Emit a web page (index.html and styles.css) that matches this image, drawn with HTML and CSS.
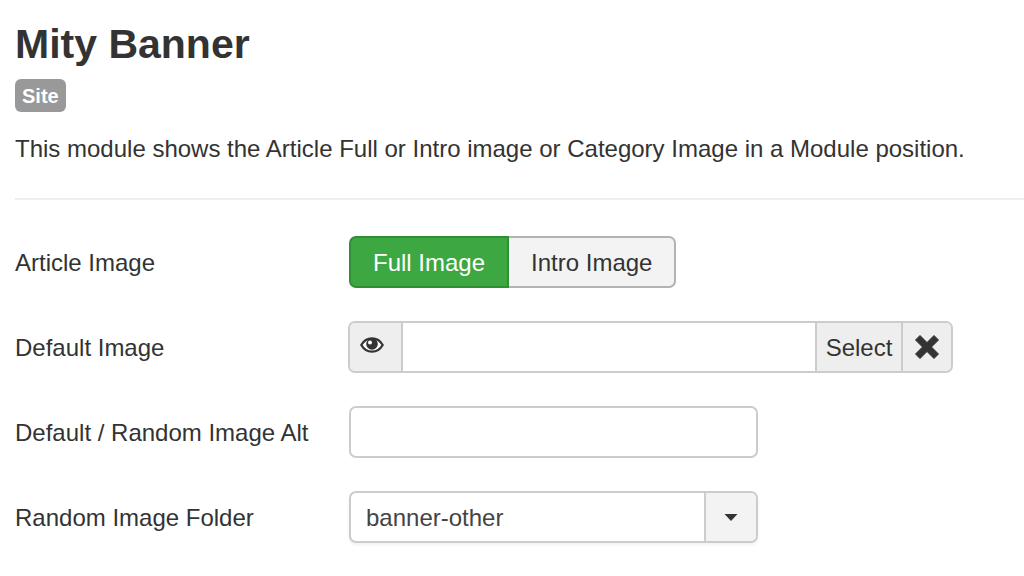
FILE: index.html
```html
<!DOCTYPE html>
<html lang="en">
<head>
<meta charset="utf-8">
<meta name="viewport" content="width=device-width, initial-scale=1">
<title>Mity Banner</title>
<link rel="stylesheet" href="styles.css">
</head>
<body>
<main class="module">
  <header class="module-header">
    <h1 class="module-title">Mity Banner</h1>
    <span class="badge">Site</span>
    <p class="module-description">This module shows the Article Full or Intro image or Category Image in a Module position.</p>
  </header>
  <form class="options">
    <div class="row" role="radiogroup" aria-labelledby="article-image">
      <span class="row-label" id="article-image">Article Image</span>
      <div class="toggle">
        <input class="toggle-input" type="radio" name="image" id="full" checked>
        <label class="toggle-option" for="full">Full Image</label>
        <input class="toggle-input" type="radio" name="image" id="intro">
        <label class="toggle-option" for="intro">Intro Image</label>
      </div>
    </div>
    <div class="row">
      <label class="row-label" for="default-image">Default Image</label>
      <div class="media">
        <button class="media-button media-preview" type="button" aria-label="Preview">
          <svg class="icon-eye" viewBox="0 0 24 16" aria-hidden="true">
            <path d="M1.3 8C3.8 3.5 7.6 1.4 12 1.4S20.200 3.500 22.700 8C20.200 12.500 16.400 14.600 12 14.600S3.800 12.500 1.300 8Z" fill="#fff" stroke="#333" stroke-width="2.2"/>
            <circle cx="12" cy="7" r="5.800" fill="#333"/>
            <circle cx="10" cy="5.400" r="2" fill="#fff"/>
          </svg>
        </button>
        <input class="media-input" type="text" id="default-image">
        <button class="media-button media-select" type="button">Select</button>
        <button class="media-button media-clear" type="button" aria-label="Clear">
          <svg class="icon-clear" viewBox="0 0 24 24" aria-hidden="true">
            <path d="M5 0.500 12 7.500 19 0.500 23.500 5 16.500 12 23.500 19 19 23.500 12 16.500 5 23.500 0.500 19 7.500 12 0.500 5Z" fill="#333" stroke="#333" stroke-linejoin="round"/>
          </svg>
        </button>
      </div>
    </div>
    <div class="row">
      <label class="row-label" for="alt">Default / Random Image Alt</label>
      <input class="field" type="text" id="alt">
    </div>
    <div class="row">
      <label class="row-label" for="folder">Random Image Folder</label>
      <div class="dropdown">
        <select class="field dropdown-select" id="folder">
          <option>banner-other</option>
        </select>
        <span class="dropdown-arrow">
          <svg class="icon-caret" viewBox="0 0 14 7" aria-hidden="true"><path d="M0.500 0H13.500L7 7Z" fill="#333"/></svg>
        </span>
      </div>
    </div>
  </form>
</main>
</body>
</html>
```
FILE: styles.css
```css
* {
  box-sizing: border-box;
}

body {
  margin: 0;
  background: #fff;
  color: #333;
  font-family: "Liberation Sans", Arial, sans-serif;
  font-size: 24px;
  line-height: 36px;
}

button,
input,
select {
  margin: 0;
  color: inherit;
  font: inherit;
}

.module {
  padding: 20px 0 32px 15px;
}

.module-header {
  display: flex;
  flex-direction: column;
  align-items: flex-start;
  padding-bottom: 31px;
  border-bottom: 2px solid #eee;
}

.module-title {
  margin: 0 0 11px;
  font-size: 41px;
  line-height: 48px;
}

.badge {
  padding: 2px 7px 0;
  border-radius: 6px;
  background: #999;
  color: #fff;
  font-size: 20px;
  font-weight: bold;
  line-height: 31px;
}

.module-description {
  margin: 19px 0 0;
}

.options {
  display: flex;
  flex-direction: column;
  gap: 33px;
  padding: 36px 15px 0 0;
}

.row {
  display: grid;
  grid-template-columns: 333px minmax(0, 1fr);
  align-items: center;
  min-height: 52px;
}

.row-label {
  padding-top: 2px;
}

.toggle {
  display: flex;
  margin-left: 1px;
}

.toggle-input {
  position: absolute;
  opacity: 0;
}

.toggle-option {
  height: 52px;
  padding: 7px 22px;
  border: 2px solid #b3b3b3;
  border-left: 0;
  border-radius: 0 7px 7px 0;
  background: #f3f3f3;
  line-height: 36px;
}

.toggle-option:first-of-type {
  border-left: 2px solid #b3b3b3;
  border-radius: 7px 0 0 7px;
}

.toggle-input:checked + .toggle-option {
  border-color: #2f8f34;
  background: #3da742;
  color: #fff;
}

.media {
  display: flex;
  width: 100%;
  max-width: 605px;
  height: 52px;
  border: 2px solid #ccc;
  border-radius: 7px;
  overflow: hidden;
}

.media-button {
  display: flex;
  align-items: center;
  justify-content: center;
  padding: 0;
  border: 0 solid #ccc;
  background: #eee;
}

.media-preview {
  width: 53px;
  padding: 0 8px 4px 0;
  border-right-width: 2px;
}

.media-input {
  flex: 1;
  min-width: 0;
  padding: 0 12px;
  border: 0;
}

.media-select {
  width: 86px;
  padding-top: 2px;
  border-left-width: 2px;
}

.media-clear {
  width: 50px;
  border-left-width: 2px;
}

.icon-eye {
  width: 24px;
  height: 16px;
}

.icon-clear {
  width: 24px;
  height: 24px;
}

.field {
  width: 100%;
  max-width: 409px;
  height: 52px;
  margin-left: 1px;
  padding: 0 15px;
  border: 2px solid #ccc;
  border-radius: 7px;
  background: #fff;
}

.dropdown {
  display: flex;
  position: relative;
  max-width: 410px;
}

.dropdown-select {
  appearance: none;
  padding-top: 2px;
  color: #444;
  box-shadow: 0 2px 3px rgba(0, 0, 0, 0.06);
}

.dropdown-arrow {
  position: absolute;
  top: 2px;
  right: 2px;
  bottom: 2px;
  display: flex;
  align-items: center;
  justify-content: center;
  width: 52px;
  border-left: 2px solid #ccc;
  border-radius: 0 5px 5px 0;
  background: #f3f3f3;
  pointer-events: none;
}

.icon-caret {
  width: 14px;
  height: 7px;
}
```
